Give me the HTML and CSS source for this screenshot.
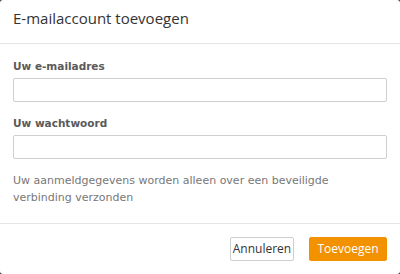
FILE: index.html
```html
<!DOCTYPE html>
<html lang="nl">
<head>
<meta charset="utf-8">
<link rel="stylesheet" href="styles.css">
</head>
<body>
<div class="dialog">
  <div class="header">E-mailaccount toevoegen</div>
  <div class="content">
    <label class="label" for="email">Uw e-mailadres</label>
    <input class="input" id="email" type="text">
    <label class="label second" for="pw">Uw wachtwoord</label>
    <input class="input" id="pw" type="password">
    <p class="note">Uw aanmeldgegevens worden alleen over een beveiligde verbinding verzonden</p>
  </div>
  <div class="footer">
    <button class="btn btn-secondary">Annuleren</button>
    <button class="btn btn-primary">Toevoegen</button>
  </div>
</div>
</body>
</html>
```

FILE: styles.css
```css
html, body {
  margin: 0;
  padding: 0;
  background: #3a3a3a;
}
.dialog {
  width: 400px;
  height: 274px;
  background: #fff;
  border-radius: 3px;
  box-sizing: border-box;
  display: flex;
  flex-direction: column;
  font-family: "DejaVu Sans", sans-serif;
}
.header {
  height: 44px;
  box-sizing: border-box;
  padding: 8px 13px 0;
  font-family: "Open Sans", sans-serif;
  font-size: 15px;
  color: #333;
  border-bottom: 1px solid #e5e5e5;
}
.content {
  flex: 1;
  padding: 15px 13px 0;
  display: flex;
  flex-direction: column;
}
.label {
  font-weight: bold;
  font-size: 10.5px;
  color: #5a5a5a;
  line-height: 14px;
}
.input {
  margin-top: 5px;
  height: 24px;
  box-sizing: border-box;
  border: 1px solid #cfcfcf;
  border-radius: 2px;
  width: 100%;
  padding: 0 6px;
}
.label.second {
  margin-top: 14px;
}
.note {
  margin: 13px 0 0;
  font-size: 11px;
  line-height: 17px;
  color: #777;
}
.footer {
  height: 51px;
  box-sizing: border-box;
  border-top: 1px solid #e5e5e5;
  display: flex;
  justify-content: flex-end;
  align-items: flex-start;
  gap: 15px;
  padding: 13px 13px 0;
}
.btn {
  height: 24px;
  box-sizing: border-box;
  border-radius: 2px;
  font-family: "Open Sans", sans-serif;
  font-size: 12px;
  line-height: 22px;
  padding: 0;
}
.btn-secondary {
  background: #fff;
  border: 1px solid #cfcfcf;
  color: #333;
  width: 64px;
}
.btn-primary {
  background: #f39200;
  border: 1px solid #f39200;
  color: #fff;
  width: 78px;
}
```
